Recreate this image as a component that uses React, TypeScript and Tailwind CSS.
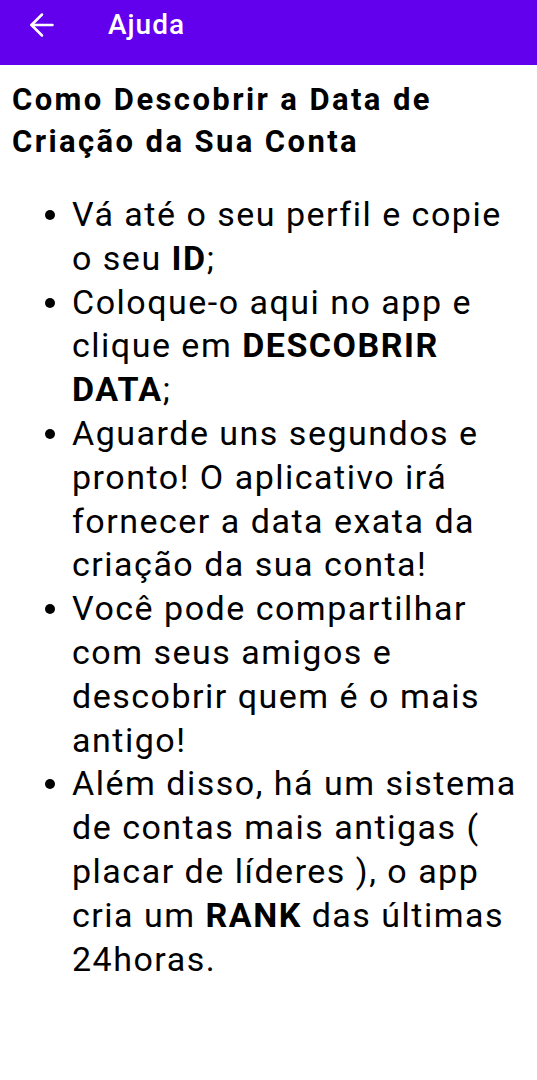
import { ArrowLeft } from "lucide-react"

const ITEMS: React.ReactNode[] = [
  <>Vá até o seu perfil e copie o seu <b>ID</b>;</>,
  <>Coloque-o aqui no app e clique em <b>DESCOBRIR DATA</b>;</>,
  <>Aguarde uns segundos e pronto! O aplicativo irá fornecer a data exata da criação da sua conta!</>,
  <>Você pode compartilhar com seus amigos e descobrir quem é o mais antigo!</>,
  <>Além disso, há um sistema de contas mais antigas ( placar de líderes ), o app cria um <b>RANK</b> das últimas 24horas.</>,
]

export default function App() {
  return (
    <div className="min-h-screen bg-white text-black" style={{ fontFamily: "Roboto, 'Noto Sans', sans-serif" }}>
      {/* Toolbar */}
      <header className="h-[65px] bg-[#6200ee] flex items-center text-white">
        <ArrowLeft className="ml-[24px] mb-[15px] h-[36px] w-[36px]" strokeWidth={1.7} />
        <h1 className="ml-[48px] mb-[16px] text-[28px] font-medium tracking-[1px]">Ajuda</h1>
      </header>

      <main className="pl-[12px] pr-[16px] pt-[14px]">
        <h2 className="text-[31px] font-bold leading-[42px] tracking-[2.4px]">
          Como Descobrir a Data de Criação da Sua Conta
        </h2>

        <ul className="mt-[30px]">
          {ITEMS.map((item, i) => (
            <li key={i} className="flex text-[34px] leading-[43.8px] tracking-[1.5px]">
              <span className="w-[60px] shrink-0 flex justify-end pr-[17px] pt-[17px]">
                <span className="block h-[10px] w-[10px] rounded-full bg-black" />
              </span>
              <span>{item}</span>
            </li>
          ))}
        </ul>
      </main>
    </div>
  )
}
